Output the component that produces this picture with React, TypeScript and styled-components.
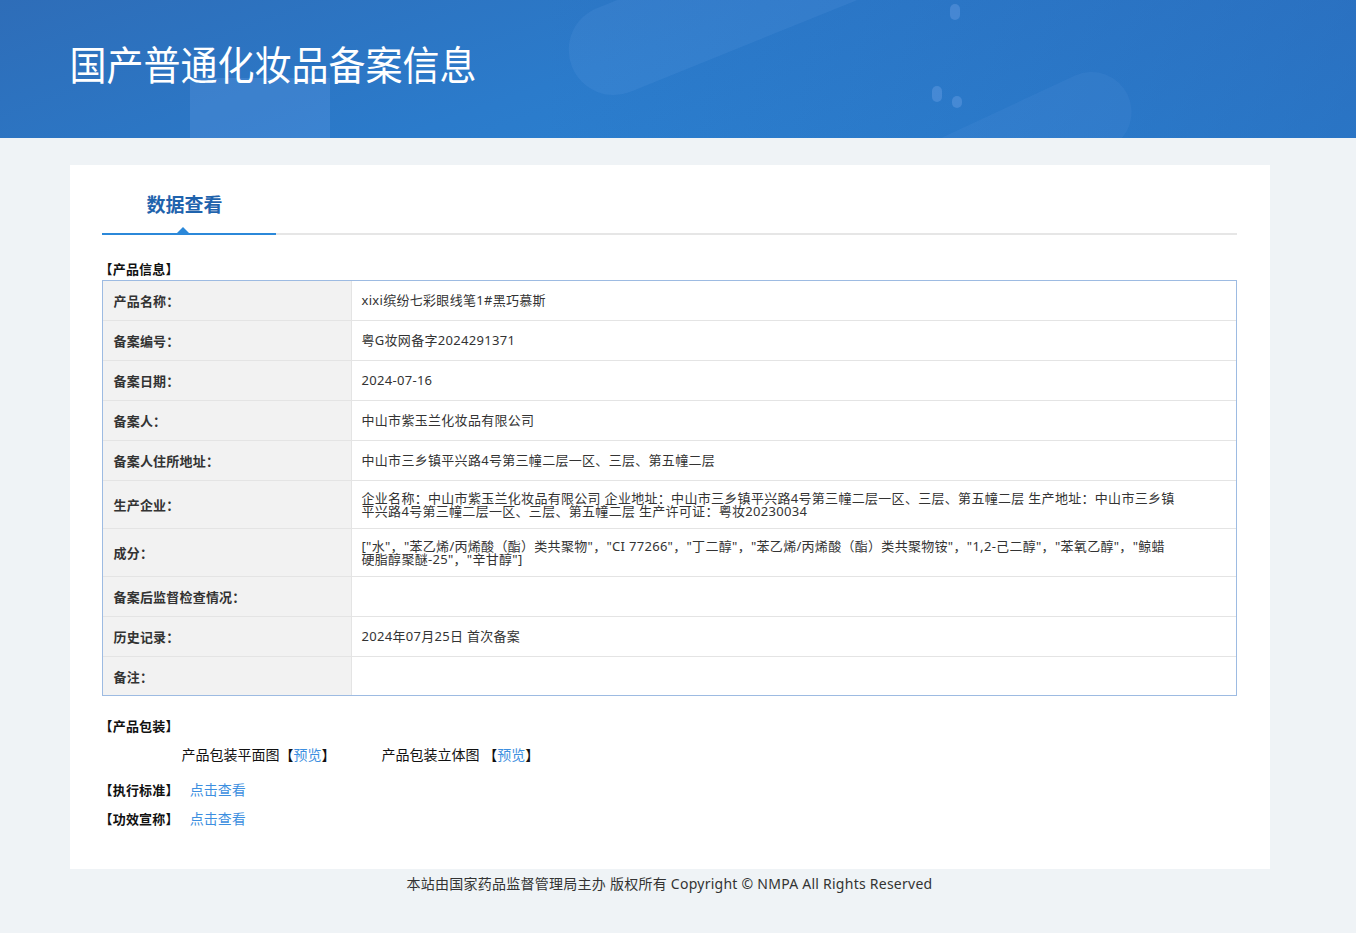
import React from "react";
import styled, { createGlobalStyle } from "styled-components";

const GlobalStyle = createGlobalStyle`
  html, body { margin: 0; padding: 0; background: #eff3f6; }
  body { font-family: "Noto Sans", "Noto Sans CJK SC", sans-serif; color: #333; }
  * { box-sizing: border-box; }
`;

const Page = styled.div`
  min-height: 933px;
  background: #eff3f6;
  padding-right: 17px;
`;

const Header = styled.header`
  position: relative;
  overflow: hidden;
  height: 138px;
  margin-right: -17px;
  background: linear-gradient(160deg, #2e6db8 0%, #2b7bcb 45%, #2a88d8 100%);
  &::before {
    content: "";
    position: absolute;
    inset: 0;
    background: linear-gradient(90deg, rgba(42, 80, 160, 0) 40%, rgba(42, 80, 160, 0.35) 100%);
  }
`;

const Deco = styled.div<{ $l: number; $t: number; $w: number; $h: number; $r: number; $rot: number; $a: number }>`
  position: absolute;
  left: ${p => p.$l}px;
  top: ${p => p.$t}px;
  width: ${p => p.$w}px;
  height: ${p => p.$h}px;
  border-radius: ${p => p.$r}px;
  transform: rotate(${p => p.$rot}deg);
  background: rgba(120, 170, 235, ${p => p.$a});
`;

const HeaderInner = styled.div`
  position: relative;
  width: 1200px;
  margin: 0 auto;
  transform: translateX(-8.5px);
  padding-top: 39px;
`;

const Title = styled.h1`
  margin: 0;
  font-family: "Noto Sans CJK SC", sans-serif;
  font-size: 40px;
  line-height: 48px;
  font-weight: 400;
  color: #fff;
  transform: scaleX(0.925);
  transform-origin: left center;
  white-space: nowrap;
`;

const Card = styled.main`
  width: 1200px;
  margin: 27px auto 0;
  background: #fff;
  padding: 0 33px 41px 32px;
`;

const TabBar = styled.div`
  display: flex;
  height: 70px;
  border-bottom: 2px solid #e6e6e6;
`;

const Tab = styled.div`
  position: relative;
  width: 174px;
  margin-bottom: -2px;
  padding-left: 45px;
  padding-top: 8px;
  display: flex;
  align-items: center;
  font-family: "Noto Sans CJK SC", sans-serif;
  font-size: 19px;
  font-weight: 700;
  color: #1f63ad;
  border-bottom: 2px solid #2b88d9;
  &::after {
    content: "";
    position: absolute;
    left: 75px;
    bottom: 0;
    border-left: 6px solid transparent;
    border-right: 6px solid transparent;
    border-bottom: 6px solid #2b88d9;
  }
`;

const SectionTitle = styled.div<{ $mt: number }>`
  margin-top: ${p => p.$mt}px;
  font-size: 13px;
  line-height: 18px;
  font-weight: 700;
  letter-spacing: 0.2px;
  color: #111;
  margin-left: -2px;
`;

const Table = styled.div`
  margin-top: 2px;
  border: 1px solid #9dbbe2;
`;

const Row = styled.div<{ $tall?: boolean }>`
  display: grid;
  grid-template-columns: 249px 1fr;
  min-height: ${p => (p.$tall ? 48 : 40)}px;
  border-top: 1px solid #e4e4e4;
  &:first-child { border-top: none; min-height: 39px; }
  &:last-child { min-height: 39px; }
`;

const Label = styled.div`
  display: flex;
  align-items: center;
  padding-left: 11px;
  background: #f2f2f2;
  border-right: 1px solid #e4e4e4;
  font-size: 13px;
  font-weight: 700;
  letter-spacing: 0.2px;
  color: #333;
`;

const Value = styled.div`
  display: flex;
  align-items: center;
  padding: 8px 59px 8px 10px;
  font-size: 13px;
  line-height: 13px;
  letter-spacing: 0.3px;
  color: #333;
`;

const PackRow = styled.div`
  display: flex;
  padding-left: 80px;
  margin-top: 10px;
  font-size: 14px;
  line-height: 20px;
  color: #111;
`;

const PackItem = styled.span`
  width: 200px;
`;

const Link = styled.a`
  color: #3d8fe0;
  text-decoration: none;
  cursor: pointer;
  font-size: 14px;
`;

const InfoRow = styled.div<{ $mt: number }>`
  display: flex;
  align-items: center;
  margin-top: ${p => p.$mt}px;
  margin-left: -2px;
  font-size: 13px;
  line-height: 18px;
`;

const InfoLabel = styled.span`
  font-weight: 700;
  letter-spacing: 0.2px;
  color: #111;
  margin-right: 11px;
`;

const Footer = styled.footer`
  width: 1200px;
  margin: 0 auto;
  padding: 5px 0 30px;
  text-align: center;
  font-size: 14px;
  line-height: 20px;
  letter-spacing: 0.25px;
  color: #333;
`;

const rows: { label: string; value: string; tall?: boolean }[] = [
  { label: "产品名称：", value: "xixi缤纷七彩眼线笔1#黑巧慕斯" },
  { label: "备案编号：", value: "粤G妆网备字2024291371" },
  { label: "备案日期：", value: "2024-07-16" },
  { label: "备案人：", value: "中山市紫玉兰化妆品有限公司" },
  { label: "备案人住所地址：", value: "中山市三乡镇平兴路4号第三幢二层一区、三层、第五幢二层" },
  {
    label: "生产企业：",
    value:
      "企业名称：中山市紫玉兰化妆品有限公司 企业地址：中山市三乡镇平兴路4号第三幢二层一区、三层、第五幢二层 生产地址：中山市三乡镇平兴路4号第三幢二层一区、三层、第五幢二层 生产许可证：粤妆20230034",
    tall: true,
  },
  {
    label: "成分：",
    value:
      "[\"水\"，\"苯乙烯/丙烯酸（酯）类共聚物\"，\"CI 77266\"，\"丁二醇\"，\"苯乙烯/丙烯酸（酯）类共聚物铵\"，\"1,2-己二醇\"，\"苯氧乙醇\"，\"鲸蜡硬脂醇聚醚-25\"，\"辛甘醇\"]",
    tall: true,
  },
  { label: "备案后监督检查情况：", value: "" },
  { label: "历史记录：", value: "2024年07月25日 首次备案" },
  { label: "备注：", value: "" },
];

export default function App() {
  return (
    <Page>
      <GlobalStyle />
      <Header>
        <Deco $l={560} $t={-40} $w={330} $h={90} $r={45} $rot={-22} $a={0.12} />
        <Deco $l={190} $t={78} $w={140} $h={80} $r={0} $a={0.22} $rot={0} />
        <Deco $l={880} $t={110} $w={260} $h={80} $r={40} $rot={-25} $a={0.1} />
        <Deco $l={950} $t={4} $w={10} $h={16} $r={5} $rot={0} $a={0.35} />
        <Deco $l={932} $t={86} $w={10} $h={16} $r={5} $rot={0} $a={0.35} />
        <Deco $l={952} $t={96} $w={10} $h={12} $r={5} $rot={0} $a={0.35} />
        <HeaderInner>
          <Title>国产普通化妆品备案信息</Title>
        </HeaderInner>
      </Header>
      <Card>
        <TabBar>
          <Tab>数据查看</Tab>
        </TabBar>
        <SectionTitle $mt={25}>【产品信息】</SectionTitle>
        <Table>
          {rows.map(r => (
            <Row key={r.label} $tall={r.tall}>
              <Label>{r.label}</Label>
              <Value>{r.value}</Value>
            </Row>
          ))}
        </Table>
        <SectionTitle $mt={21}>【产品包装】</SectionTitle>
        <PackRow>
          <PackItem>
            产品包装平面图【<Link>预览</Link>】
          </PackItem>
          <PackItem>
            产品包装立体图 【<Link>预览</Link>】
          </PackItem>
        </PackRow>
        <InfoRow $mt={16}>
          <InfoLabel>【执行标准】</InfoLabel>
          <Link>点击查看</Link>
        </InfoRow>
        <InfoRow $mt={11}>
          <InfoLabel>【功效宣称】</InfoLabel>
          <Link>点击查看</Link>
        </InfoRow>
      </Card>
      <Footer>本站由国家药品监督管理局主办 版权所有 Copyright © NMPA All Rights Reserved</Footer>
    </Page>
  );
}
